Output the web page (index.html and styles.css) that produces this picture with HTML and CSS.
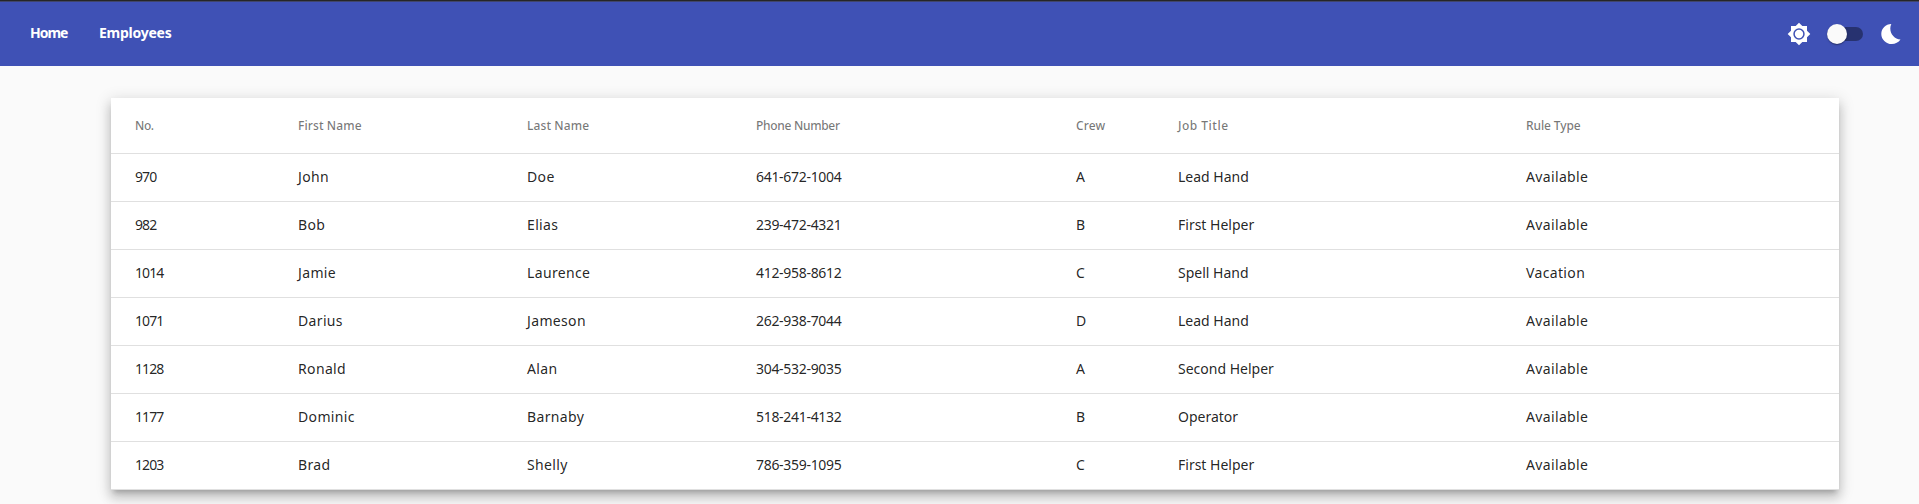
FILE: index.html
```html
<!DOCTYPE html>
<html lang="en">
<head>
<meta charset="utf-8">
<title>Employees</title>
<link rel="stylesheet" href="styles.css">
</head>
<body>
<header class="toolbar">
  <nav class="nav"><a class="link home">Home</a><a class="link employees">Employees</a></nav>
  <div class="theme">
    <svg class="icon" viewBox="0 0 24 24"><path d="M20 15.31L23.31 12 20 8.69V4h-4.69L12 .69 8.69 4H4v4.69L.69 12 4 15.31V20h4.69L12 23.31 15.31 20H20v-4.69zM12 17.700a5.700 5.700 0 1 1 0-11.400 5.700 5.700 0 0 1 0 11.400z"/><circle cx="12" cy="12" r="4.200"/></svg>
    <span class="toggle"><span class="thumb"></span></span>
    <svg class="icon" viewBox="0 0 24 24"><path d="M12.3 2C11.6 3.4 11.3 4.900 11.300 6.500C11.300 12.400 15.800 17.200 21.500 17.500C19.500 20.300 16.300 22 12.800 22C7 22 2.300 17.400 2.300 11.900C2.300 6.500 6.700 2.100 12.300 2Z"/></svg>
  </div>
</header>
<main class="page">
  <table class="card">
    <colgroup><col class="c-no"><col class="c-first"><col class="c-last"><col class="c-phone"><col class="c-crew"><col class="c-job"><col class="c-rule"></colgroup>
    <thead><tr><th>No.</th><th>First Name</th><th>Last Name</th><th class="tight">Phone Number</th><th>Crew</th><th class="wide">Job Title</th><th class="type">Rule Type</th></tr></thead>
    <tbody>
      <tr><td class="num">970</td><td>John</td><td>Doe</td><td class="phone">641-672-1004</td><td class="crew">A</td><td class="job">Lead Hand</td><td>Available</td></tr>
      <tr><td class="num">982</td><td>Bob</td><td>Elias</td><td class="phone">239-472-4321</td><td class="crew">B</td><td class="job">First Helper</td><td>Available</td></tr>
      <tr><td class="num">1014</td><td>Jamie</td><td>Laurence</td><td class="phone">412-958-8612</td><td class="crew">C</td><td class="job">Spell Hand</td><td>Vacation</td></tr>
      <tr><td class="num">1071</td><td>Darius</td><td>Jameson</td><td class="phone">262-938-7044</td><td class="crew">D</td><td class="job">Lead Hand</td><td>Available</td></tr>
      <tr><td class="num">1128</td><td>Ronald</td><td>Alan</td><td class="phone">304-532-9035</td><td class="crew">A</td><td class="job">Second Helper</td><td>Available</td></tr>
      <tr><td class="num">1177</td><td>Dominic</td><td>Barnaby</td><td class="phone">518-241-4132</td><td class="crew">B</td><td class="job">Operator</td><td>Available</td></tr>
      <tr><td class="num">1203</td><td>Brad</td><td>Shelly</td><td class="phone">786-359-1095</td><td class="crew">C</td><td class="job">First Helper</td><td>Available</td></tr>
    </tbody>
  </table>
</main>
</body>
</html>
```
FILE: styles.css
```css
* { box-sizing: border-box; }
body {
  margin: 0;
  height: 504px;
  overflow: hidden;
  background: #fafafa;
  font-family: "Noto Sans", sans-serif;
  font-size: 14px;
  color: rgba(0, 0, 0, .87);
}
.toolbar {
  display: flex;
  justify-content: space-between;
  align-items: center;
  height: 66px;
  border-top: 1px solid #262626;
  padding: 1px 16px 0 30px;
  background: #3f51b5;
  box-shadow: inset 0 1px #40456b;
  color: #fff;
}
.nav { display: flex; gap: 32px; padding-bottom: 2px; }
.link { font-weight: 700; line-height: 20px; }
.home { width: 37px; letter-spacing: -1px; }
.employees { letter-spacing: -.25px; }
.theme { display: flex; align-items: center; }
.icon { width: 24px; height: 24px; fill: currentColor; }
.toggle {
  display: flex;
  align-items: center;
  width: 36px;
  height: 14px;
  margin: 0 16px;
  border-radius: 7px;
  background: rgba(0, 0, 0, .38);
}
.thumb {
  width: 20px;
  height: 20px;
  border-radius: 50%;
  background: #fafafa;
  box-shadow: 0 2px 1px -1px rgba(0, 0, 0, .2), 0 1px 1px rgba(0, 0, 0, .14), 0 1px 3px rgba(0, 0, 0, .12);
}
.page { display: flex; padding: 32px 80px 0 111px; }
.card {
  width: 1728px;
  table-layout: fixed;
  border-spacing: 0;
  background: #fff;
  box-shadow: 0 5px 5px -3px rgba(0, 0, 0, .2), 0 8px 10px 1px rgba(0, 0, 0, .14), 0 3px 14px 2px rgba(0, 0, 0, .12);
}
.c-no { width: 187px; }
.c-first { width: 229px; }
.c-last { width: 229px; }
.c-phone { width: 320px; }
.c-crew { width: 102px; }
.c-job { width: 348px; }
th, td { text-align: left; border-bottom: 1px solid #e0e0e0; white-space: nowrap; }
th { height: 56px; padding: 0; font-size: 12px; font-weight: 500; letter-spacing: .1px; color: rgba(0, 0, 0, .54); }
td { height: 48px; padding: 0 0 2px; letter-spacing: .35px; }
th:first-child, td:first-child { padding-left: 24px; }
th:first-child { letter-spacing: -.4px; }
.tight { letter-spacing: -.3px; }
.wide { letter-spacing: .5px; }
.type { letter-spacing: -.1px; }
.job { letter-spacing: 0; }
.num { letter-spacing: -.9px; }
.phone { letter-spacing: -.3px; }
```
